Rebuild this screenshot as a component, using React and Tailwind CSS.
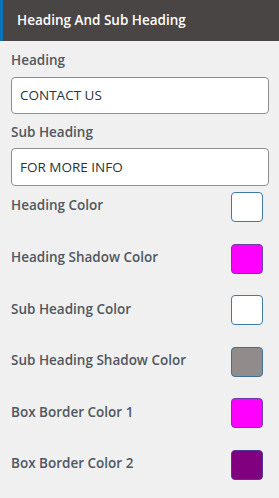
import React from 'react';

const colorRows = [
  { label: 'Heading Color', color: '#ffffff', border: '#3f79a8' },
  { label: 'Heading Shadow Color', color: '#ff00ff', border: '#6b3fa8' },
  { label: 'Sub Heading Color', color: '#ffffff', border: '#3f79a8' },
  { label: 'Sub Heading Shadow Color', color: '#928b8b', border: '#3f6f98' },
  { label: 'Box Border Color 1', color: '#ff00ff', border: '#6b3fa8' },
  { label: 'Box Border Color 2', color: '#800080', border: '#4b3a98' },
];

const App = () => {
  return (
    <div
      className="w-[279px] h-[498px] bg-[#f0f0f1] overflow-hidden"
      style={{ fontFamily: '"Open Sans", "Noto Sans", sans-serif' }}
    >
      {/* Panel header */}
      <div className="h-[41px] bg-[#4a4545] border-l-[3px] border-[#0a74b8] flex items-center pl-[14px]">
        <span className="text-white text-[13.5px] font-semibold">Heading And Sub Heading</span>
      </div>

      <div className="px-[11px] pr-[10px] pt-[10px]">
        {/* Text fields */}
        <label className="block text-[13.5px] leading-[18px] font-semibold text-[#50575e]">Heading</label>
        <div className="mt-[8px] h-[37px] bg-white border border-[#8c8f94] rounded-[4px] flex items-center px-[8px] text-[13.5px] text-[#2c3338]">
          CONTACT US
        </div>

        <label className="block mt-[9px] text-[13.5px] leading-[18px] font-semibold text-[#50575e]">Sub Heading</label>
        <div className="mt-[7px] h-[38px] bg-white border border-[#8c8f94] rounded-[4px] flex items-center px-[8px] text-[13.5px] text-[#2c3338]">
          FOR MORE INFO
        </div>

        {/* Color pickers */}
        <div className="mt-[6px] flex flex-col gap-[21.6px]">
          {colorRows.map((row) => (
            <div key={row.label} className="flex items-center justify-between">
              <span className="text-[13.5px] font-semibold text-[#50575e] -mt-[3px]">{row.label}</span>
              <div
                className="w-[32px] h-[30px] rounded-[4px] border mr-[6px]"
                style={{ backgroundColor: row.color, borderColor: row.border }}
              />
            </div>
          ))}
        </div>
      </div>
    </div>
  );
};

export default App;
